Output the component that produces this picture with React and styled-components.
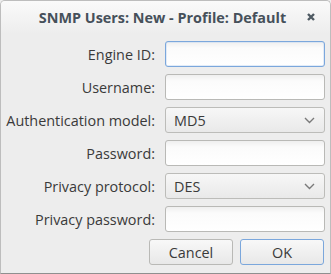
import React from 'react'
import styled, { createGlobalStyle } from 'styled-components'

const GlobalStyle = createGlobalStyle`
    html, body {
        margin: 0;
        padding: 0;
        background: #ededed;
    }
    body {
        font-family: 'Open Sans', 'DejaVu Sans', sans-serif;
    }
`

const Window = styled.div`
    box-sizing: border-box;
    width: 331px;
    height: 274px;
    background: #ededed;
    border: 1px solid #bdbdbd;
    border-bottom-color: #8f8f8f;
    border-radius: 5px 5px 0 0;
    overflow: hidden;
    display: flex;
    flex-direction: column;
`

const TitleBar = styled.div`
    height: 33px;
    display: flex;
    align-items: center;
    justify-content: center;
    position: relative;
    background: linear-gradient(#fafafa, #ededed);
    color: #46505a;
    font-weight: bold;
    font-size: 14.4px;
    padding-right: 6px;
`

const CloseButton = styled.span`
    position: absolute;
    right: 14px;
    top: 11px;
    width: 10px;
    height: 10px;
    display: flex;
`

const Form = styled.div`
    display: grid;
    grid-template-columns: 154px 160px;
    grid-auto-rows: 26px;
    column-gap: 10px;
    row-gap: 7px;
    padding: 7px 0 0 0;
`

const Label = styled.label`
    display: flex;
    align-items: center;
    justify-content: flex-end;
    font-size: 14.4px;
    color: #3a3a3a;
    white-space: nowrap;
`

const Field = styled.div`
    box-sizing: border-box;
    height: 26px;
    border-radius: 3px;
    border: 1px solid ${p => (p.$focused ? '#7ba7dc' : '#b9b9b6')};
    background: linear-gradient(#efefef, #fbfbfb 25%, #ffffff);
    box-shadow: ${p => (p.$focused ? 'inset 0 0 0 0.5px #c6d9f1' : 'none')};
`

const Combo = styled.div`
    box-sizing: border-box;
    height: 26px;
    border-radius: 3px;
    border: 1px solid #bcbcb9;
    background: linear-gradient(#f7f7f7, #e9e9e9);
    display: flex;
    align-items: center;
    justify-content: space-between;
    padding: 0 9px 0 8px;
    font-size: 14.4px;
    color: #3a3a3a;
`

const Buttons = styled.div`
    display: flex;
    justify-content: flex-end;
    gap: 7px;
    padding: 7px 6px 0 0;
`

const Button = styled.button`
    box-sizing: border-box;
    width: 84px;
    height: 26px;
    border-radius: 3px;
    border: 1px solid ${p => (p.$default ? '#7ba7dc' : '#b9b9b6')};
    background: linear-gradient(#f8f8f8, #e8e8e8);
    font-family: inherit;
    font-size: 14.4px;
    color: #3a3a3a;
    padding: 0;
`

const Chevron = () => (
    <svg width="11" height="7" viewBox="0 0 11 7">
        <path d="M1 1 L5.5 5.5 L10 1" fill="none" stroke="#7a7a7a" strokeWidth="1.4" />
    </svg>
)

const CloseIcon = () => (
    <svg width="10" height="10" viewBox="0 0 10 10">
        <path d="M2 2 L8 8 M8 2 L2 8" stroke="#4f5a63" strokeWidth="2.4" strokeLinecap="butt" />
    </svg>
)

export default function App() {
    return (
        <>
            <GlobalStyle />
            <Window>
                <TitleBar>
                    SNMP Users: New - Profile: Default
                    <CloseButton>
                        <CloseIcon />
                    </CloseButton>
                </TitleBar>
                <Form>
                    <Label>Engine ID:</Label>
                    <Field $focused />
                    <Label>Username:</Label>
                    <Field />
                    <Label>Authentication model:</Label>
                    <Combo>
                        MD5
                        <Chevron />
                    </Combo>
                    <Label>Password:</Label>
                    <Field />
                    <Label>Privacy protocol:</Label>
                    <Combo>
                        DES
                        <Chevron />
                    </Combo>
                    <Label>Privacy password:</Label>
                    <Field />
                </Form>
                <Buttons>
                    <Button>Cancel</Button>
                    <Button $default>OK</Button>
                </Buttons>
            </Window>
        </>
    )
}
